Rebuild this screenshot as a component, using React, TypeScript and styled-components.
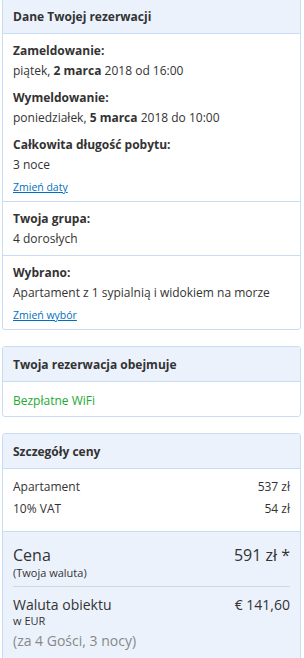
import React from "react";
import styled, { createGlobalStyle } from "styled-components";

const Global = createGlobalStyle`
  html, body { margin: 0; padding: 0; background: #fff; }
  body {
    font-family: "Open Sans", "Noto Sans", "DejaVu Sans", sans-serif;
    font-size: 12px;
    color: #333;
  }
`;

const Page = styled.div`
  padding: 0 3px 0 2px;
  margin-top: -2px;
  display: flex;
  flex-direction: column;
  gap: 16px;
`;

const Panel = styled.section`
  border: 1px solid #c9dcf5;
  border-radius: 3px;
  overflow: hidden;
  background: #fff;
`;

const PanelHeader = styled.h2`
  margin: 0;
  background: #ebf2fc;
  border-bottom: 1px solid #c9dcf5;
  padding: 8px 10px 7px;
  font-size: 12px;
  line-height: 19px;
  font-weight: 700;
  color: #333;
`;

const Section = styled.div<{ $divider?: boolean }>`
  display: flex;
  flex-direction: column;
  gap: 7px;
  padding: 7px 10px 6px;
  border-top: ${(p) => (p.$divider ? "1px solid #c9dcf5" : "none")};
`;

const Block = styled.div``;

const Label = styled.div`
  font-weight: 700;
  line-height: 20px;
`;

const Value = styled.div`
  line-height: 20px;
`;

const Link = styled.a`
  display: block;
  color: #0071c2;
  font-size: 10.5px;
  line-height: 16px;
  text-decoration: underline;
  margin-top: -3px;
`;

const Green = styled.div`
  color: #22aa33;
  padding: 9px 10px 6px;
  line-height: 19px;
`;

const PriceBody = styled.div`
  padding: 7px 10px 11px;
  border-bottom: 1px solid #c9dcf5;
`;

const PriceRow = styled.div`
  display: flex;
  justify-content: space-between;
  line-height: 22px;
`;

const Footer = styled.div`
  background: #ebf2fc;
  padding: 12px 10px 14px;
`;

const TotalRow = styled.div`
  display: flex;
  justify-content: space-between;
  align-items: flex-start;
`;

const Big = styled.div`
  font-size: 16px;
  line-height: 22px;
`;

const Small = styled.div`
  font-size: 11px;
  line-height: 14px;
`;

const TinyNote = styled.div`
  font-size: 11px;
  line-height: 13px;
  margin-top: -1px;
`;

const Rule = styled.hr`
  border: 0;
  border-top: 1px solid #d4d8de;
  margin: 6px 0 7px;
`;

const PropValue = styled.div`
  font-size: 14px;
  line-height: 21px;
`;

const Muted = styled.div`
  color: #888;
  margin-top: 4px;
  font-size: 14px;
  line-height: 20px;
`;

export default function App() {
  return (
    <>
      <Global />
      <Page>
        <Panel>
          <PanelHeader>Dane Twojej rezerwacji</PanelHeader>
          <Section>
            <Block>
              <Label>Zameldowanie:</Label>
              <Value>
                piątek, <b>2 marca</b> 2018 od 16:00
              </Value>
            </Block>
            <Block>
              <Label>Wymeldowanie:</Label>
              <Value>
                poniedziałek, <b>5 marca</b> 2018 do 10:00
              </Value>
            </Block>
            <Block>
              <Label>Całkowita długość pobytu:</Label>
              <Value>3 noce</Value>
            </Block>
            <Link href="#">Zmień daty</Link>
          </Section>
          <Section $divider>
            <Block>
              <Label>Twoja grupa:</Label>
              <Value>4 dorosłych</Value>
            </Block>
          </Section>
          <Section $divider>
            <Block>
              <Label>Wybrano:</Label>
              <Value>Apartament z 1 sypialnią i widokiem na morze</Value>
            </Block>
            <Link href="#">Zmień wybór</Link>
          </Section>
        </Panel>

        <Panel>
          <PanelHeader>Twoja rezerwacja obejmuje</PanelHeader>
          <Green>Bezpłatne WiFi</Green>
        </Panel>

        <Panel>
          <PanelHeader>Szczegóły ceny</PanelHeader>
          <PriceBody>
            <PriceRow>
              <span>Apartament</span>
              <span>537 zł</span>
            </PriceRow>
            <PriceRow>
              <span>10% VAT</span>
              <span>54 zł</span>
            </PriceRow>
          </PriceBody>
          <Footer>
            <TotalRow>
              <div>
                <Big>Cena</Big>
                <Small>(Twoja waluta)</Small>
              </div>
              <Big>591 zł *</Big>
            </TotalRow>
            <Rule />
            <TotalRow>
              <div>
                <PropValue>Waluta obiektu</PropValue>
                <TinyNote>w EUR</TinyNote>
              </div>
              <PropValue>€ 141,60</PropValue>
            </TotalRow>
            <Muted>(za 4 Gości, 3 nocy)</Muted>
          </Footer>
        </Panel>
      </Page>
    </>
  );
}
